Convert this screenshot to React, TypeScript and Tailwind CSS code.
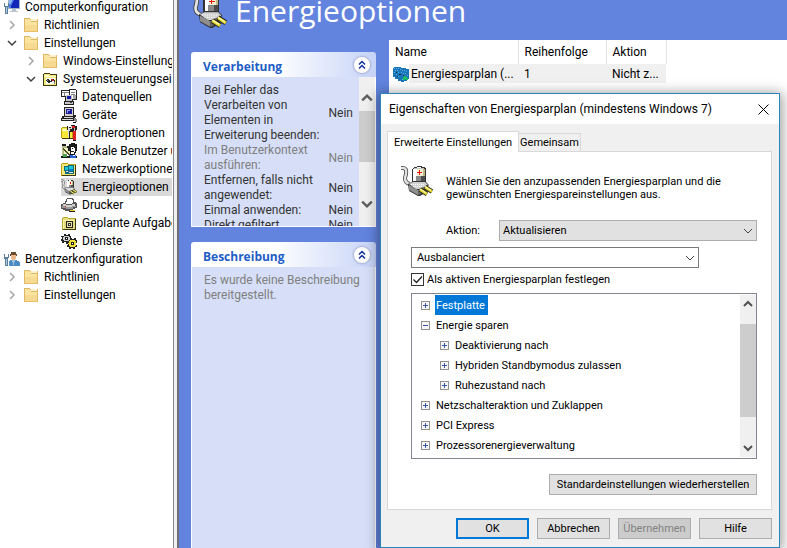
import { useState, type ReactNode } from 'react';
import { clsx } from 'clsx';

type Shape = [color: string, d: string];

// 16x16 pixel drawings, painted in order
const icons: Record<string, Shape[]> = {
  computer: [
    ['#9fb4c8', 'M4 0h12v10H4z'],
    ['#1226b8', 'M5 1h10v8H5z'],
    ['#4a7be8', 'M5 1h5v1h-1v2H8v2H7v3H5z'],
    ['#8fb6f5', 'M5 1h3v2H7v2H5z'],
    ['#b9c3cc', 'M8 10h4v2H8zM6 12h8v1H6z'],
    ['#5c7f9c', 'M0 4h1v3h3V4h1v4H4v7H1V8H0z'],
    ['#a9cce4', 'M2 8h1v6H2z'],
  ],
  folder: [
    ['#e0b765', 'M1 1h6v1h8v13H1z'],
    ['#fff3cf', 'M8 2h6v2H8z'],
    ['#fbe3a0', 'M2 2h5v1h1v2h6v9H2z'],
    ['#f7da92', 'M2 8h12v6H2z'],
    ['#e9bd63', 'M1 14h14v1H1z'],
  ],
  panel: [
    ['#3d3a10', 'M1 3h1V2h6v1h7v12H1z'],
    ['#f2e87b', 'M2 3h6v1h6v10H2z'],
    ['#fffbd0', 'M3 4h4v1H3zM2 5h12v1H2z'],
    ['#ffffff', 'M4 7h9v6H4z'],
    ['#2a2a2a', 'M4 9h1V8h2v1h1v1h1V8h3v1h1v3h-1v-2h-2v1H8v1H6v-1H5v-1H4z'],
    ['#c62222', 'M9 8h2v1H9zM10 9h2v1h-2z'],
    ['#8c8c8c', 'M5 9h1v1H5zM12 11h1v2h-1z'],
  ],
  database: [
    ['#222222', 'M0 1h9v7H0zM8 0h7v1h1v10H8zM4 5h8v8H4zM3 12h10v4H3z'],
    ['#ffffff', 'M1 2h7v5H1zM9 1h6v9H9z'],
    ['#808080', 'M1 3h7v1H1zM3 4h1v3H3zM10 3h4v1h-4zM10 5h4v1h-4z'],
    ['#c6c6c6', 'M5 6h6v6H5zM4 13h8v2H4z'],
    ['#1018a8', 'M6 7h4v3H6z'],
    ['#a8a8a8', 'M12 6h3v4h-3z'],
    ['#444444', 'M9 13h2v1H9z'],
  ],
  devices: [
    ['#222222', 'M3 0h10v10H3zM1 9h12v1h1v4H0v-3h1zM13 8h2v2h-2z'],
    ['#d4d0c8', 'M4 1h8v8H4z'],
    ['#1b1b9c', 'M5 2h6v5H5z'],
    ['#8b9ff0', 'M6 3h3v1H7v2H6z'],
    ['#d8d8d8', 'M3 10h9v1H3zM1 12h11v1H1z'],
    ['#888888', 'M13 11h2v1h1v3h-2v-1h-1z'],
    ['#111111', 'M12 15h3v1h-3z'],
  ],
  folderTools: [
    ['#b8a010', 'M0 3h1V2h5v1h6v10H0z'],
    ['#3d3a10', 'M1 13h11v1H1z'],
    ['#f8e93b', 'M1 3h5v1h5v9H1z'],
    ['#fffbd0', 'M2 4h3v1H2zM1 5h7v1H1z'],
    ['#222222', 'M6 1h1v1h3V0h4v1h2v4h-1v11h-3V7H9v7H8V5H6z'],
    ['#d8d8d8', 'M7 2h1v1h2V1h1v3H9v2H8v6H7z'],
    ['#e02020', 'M11 1h3v2h-3zM12 6h3v9h-3z'],
    ['#bdbdbd', 'M13 3h1v3h-1z'],
  ],
  users: [
    ['#1a1a1a', 'M1 1h4v2h3V1h2V0h4v1h2v7h-1v2h-1v2H9V9H7V6H5V3H1z'],
    ['#b8bd8a', 'M1 3h5v10H1z'],
    ['#f0efc0', 'M3 5h4v3h2v3H6v2H3z'],
    ['#ffffff', 'M10 4h3v1h1v4h-1v2h-3z'],
    ['#1a1a1a', 'M11 5h1v1h-1zM10 8h3v1h-3zM0 13h16v2H0z'],
    ['#2a62d8', 'M9 12h3v1h2v-1h1v3H9z'],
    ['#4aa050', 'M2 11h4v3H2z'],
    ['#4a4a2a', 'M1 6l1-1 7 7-1 1z'],
  ],
  network: [
    ['#b8a010', 'M0 3h1V2h6v1h8v12H0z'],
    ['#3d3a10', 'M1 14h14v1H1zM14 4h1v11h-1z'],
    ['#f2e87b', 'M1 3h6v1h7v10H1z'],
    ['#0a6a7a', 'M3 5h5v5H3zM7 4h6v9H7zM4 10h4v3H4z'],
    ['#18c8d8', 'M4 6h3v3H4zM8 5h4v5H8z'],
    ['#0a7ad0', 'M8 8h4v2H8z'],
    ['#e6e6e6', 'M5 10h2v1H5zM8 11h4v1H8z'],
  ],
  printer: [
    ['#555555', 'M6 1h6v1h1v3h2v1h1v5h-2v1h-2v1H9v1H4v-1H2v-1H0V7h2V6h2V4h1V2h1z'],
    ['#ffffff', 'M6 2h5v1h1v3h-1v1H5V5h1z'],
    ['#d0d0d0', 'M2 7h3v1h6V7h3v2h-3v1H5V9H2z'],
    ['#989898', 'M1 9h3v1h7V9h4v1h-3v2H5v-1H1z'],
    ['#f5d020', 'M9 13h5v1H9z'],
    ['#222222', 'M8 14h6v1H8z'],
    ['#e02020', 'M4 9h1v1H4z'],
  ],
  tasks: [
    ['#b8a830', 'M1 3h1V2h5v1h8v12H1z'],
    ['#3d3a10', 'M2 14h13v1H2zM14 4h1v11h-1z'],
    ['#e4dc7c', 'M2 3h5v1h7v10H2z'],
    ['#fbf4a8', 'M2 5h11v1H3v8H2z'],
    ['#222222', 'M5 6h7v7H5z'],
    ['#e8e0a0', 'M6 7h5v5H6z'],
    ['#333333', 'M7 8h3v3H7z'],
    ['#ffffff', 'M8 9h1v1H8z'],
  ],
  services: [
    ['#222222', 'M3 1h2v1h2V1h2v2h1v2h1v2H9v2H7v2H5V9H3v1H1V8H0V6h1V4H0V3h3z'],
    ['#d0d0d0', 'M3 3h5v1h1v3H8v1H3V7H2V4h1z'],
    ['#222222', 'M4 4h3v3H4z'],
    ['#ffffff', 'M5 5h1v1H5z'],
    ['#222222', 'M9 5h2v1h2V5h2v2h1v3h-1v2h1v2h-2v2h-2v-1h-2v1H8v-2H6v-2h1v-2H6V8h2V7h1z'],
    ['#f0df3a', 'M9 7h5v1h1v5h-1v1H9v-1H8v-2H7v-1h1V8h1z'],
    ['#222222', 'M10 9h3v3h-3z'],
    ['#ffffff', 'M11 10h1v1h-1z'],
  ],
  user: [
    ['#6b4a2c', 'M7 1h5v2h1v2H6V3h1z'],
    ['#e9b98c', 'M7 4h5v4h-1v1H8V8H7z'],
    ['#4f8cc4', 'M6 9h7v1h2v1h1v4H5v-5h1z'],
    ['#9cc4e6', 'M8 9h3v2h-1v3H9v-3H8z'],
    ['#5c7f9c', 'M0 3h1v3h3V3h1v4H4v8H1V8H0z'],
    ['#a9cce4', 'M2 8h1v6H2z'],
  ],
  plan: [
    ['#1a74b8', 'M1 1h7v1h5v1h3v10h-2v2h-3v1H8v-1H5v-2H2v-2H0V2h1z'],
    ['#5cb4e8', 'M1 2h1v1H1zM3 2h1v1H3zM5 2h1v1H5zM7 3h1v1H7zM2 4h1v1H2zM4 4h1v1H4zM9 4h1v1H9zM11 4h1v1h-1zM13 5h1v1h-1zM1 6h1v1H1zM3 8h1v1H3zM5 6h1v1H5zM8 6h1v1H8zM10 7h1v1h-1zM12 7h1v1h-1zM14 9h1v1h-1zM5 10h1v1H5zM9 13h1v1H9z'],
    ['#062c58', 'M3 6h1v1H3zM6 8h2v1H6zM4 10h1v1H4zM10 9h1v1h-1zM13 13h1v1h-1z'],
    ['#18c060', 'M10 11h1v-1h2v1h1v1h1v2h-2v-1h-1v1h-2z'],
  ],
};

function PixelIcon({ name }: { name: string }) {
  return (
    <svg viewBox="0 0 16 16" className="size-4 shrink-0" shapeRendering="crispEdges" aria-hidden="true">
      {icons[name].map(([color, d], i) => (
        <path key={i} fill={color} d={d} />
      ))}
    </svg>
  );
}

// Battery with a mains plug
function PowerIcon({ className }: { className: string }) {
  return (
    <svg viewBox="0 0 32 32" className={clsx('shrink-0', className)} aria-hidden="true">
      <path d="M0 3h2q4 0 3 6l-1 4q0 5 5 6" fill="none" stroke="#444" strokeWidth="4" />
      <path d="M0 3h2q4 0 3 6l-1 4q0 5 5 6" fill="none" stroke="#e4e4e4" strokeWidth="2.400" />
      <g shapeRendering="crispEdges">
        <path fill="#333" d="M13 2h3V1h5v1h3v1h1v14H11V4h1V3h1z" />
        <path fill="#c4c4c4" d="M13 3h10v1H13z" />
        <path fill="#fff" d="M16 2h4v1h-4zM12 4h4v12h-4z" />
        <path fill="#f4f0d0" d="M16 4h6v7h-6z" />
        <path fill="#c0b888" d="M22 4h2v7h-2z" />
        <path fill="#8a8a8a" d="M15 11h5v5h-5z" />
        <path fill="#4c4c4c" d="M20 11h4v5h-4z" />
        <path fill="#e81010" d="M18 5h1v2h2v1h-2v2h-1V8h-2V7h2z" />
      </g>
      <path fill="#333" d="M7 19l4-2h14l3 3-3 3-1 5-5 3h-2l-9-5z" />
      <path fill="#8e8e8e" d="M8 20l9 5v5l-9-5z" />
      <path fill="#686868" d="M17 25l6-3v5l-5 3h-1z" />
      <path fill="#d2d2d2" d="M8 19l4-2h12l3 3-4 2-5 2h-3z" />
      <path fill="none" stroke="#fff" strokeDasharray="1 1" d="M10 19.500h14M12 21.500h9" />
      <path d="M24 22l7 4.500M19 24.500l7 4.500" fill="none" stroke="#222" strokeWidth="4.500" />
      <path d="M24 22l7 4.500M19 24.500l7 4.500" fill="none" stroke="#e4d82c" strokeWidth="2.800" />
      <path d="M24 21.500l6 4M19 24l6 4" fill="none" stroke="#fffbc0" strokeWidth="1" />
    </svg>
  );
}

function Chevron({ dir, className }: { dir: 'up' | 'down' | 'right'; className: string }) {
  const d = { up: 'M1 7l4-4 4 4', down: 'M1 3l4 4 4-4', right: 'M3 1l4 4-4 4' }[dir];
  return (
    <svg viewBox="0 0 10 10" className={clsx('shrink-0', className)} fill="none" stroke="currentColor" aria-hidden="true">
      <path d={d} />
    </svg>
  );
}

interface NavItem {
  label: string;
  icon: string;
  level: 0 | 1 | 2 | 3;
  open?: boolean;
  selected?: boolean;
}

const navItems: NavItem[] = [
  { label: 'Computerkonfiguration', icon: 'computer', level: 0 },
  { label: 'Richtlinien', icon: 'folder', level: 1, open: false },
  { label: 'Einstellungen', icon: 'folder', level: 1, open: true },
  { label: 'Windows-Einstellungen', icon: 'folder', level: 2, open: false },
  { label: 'Systemsteuerungseinstellungen', icon: 'panel', level: 2, open: true },
  { label: 'Datenquellen', icon: 'database', level: 3 },
  { label: 'Geräte', icon: 'devices', level: 3 },
  { label: 'Ordneroptionen', icon: 'folderTools', level: 3 },
  { label: 'Lokale Benutzer und Gruppen', icon: 'users', level: 3 },
  { label: 'Netzwerkoptionen', icon: 'network', level: 3 },
  { label: 'Energieoptionen', icon: 'power', level: 3, selected: true },
  { label: 'Drucker', icon: 'printer', level: 3 },
  { label: 'Geplante Aufgaben', icon: 'tasks', level: 3 },
  { label: 'Dienste', icon: 'services', level: 3 },
  { label: 'Benutzerkonfiguration', icon: 'user', level: 0 },
  { label: 'Richtlinien', icon: 'folder', level: 1, open: false },
  { label: 'Einstellungen', icon: 'folder', level: 1, open: false },
];

const navIndent = ['pl-1', 'pl-[7px]', 'pl-[26px]', 'pl-[61px]'];

function NavTree() {
  return (
    <nav className="w-[173px] shrink-0 overflow-hidden bg-white pr-px">
      <ul className="-mt-0.5 overflow-hidden">
        {navItems.map((item, i) => (
          <li key={i} className={clsx('flex h-[18px] items-center whitespace-nowrap', navIndent[item.level])}>
            {item.open !== undefined && (
              <Chevron
                dir={item.open ? 'down' : 'right'}
                className={clsx('mr-1.5 size-[10px] stroke-[1.5]', item.open ? 'text-[#404040]' : 'text-[#a6a6a6]')}
              />
            )}
            <span className={clsx('flex h-full items-center', item.selected && 'bg-[#d9d9d9]')}>
              {item.icon === 'power' ? <PowerIcon className="size-4" /> : <PixelIcon name={item.icon} />}
            </span>
            <span className={clsx('flex h-full flex-1 items-center pl-[5px]', item.selected && 'bg-[#d9d9d9]')}>
              {item.label}
            </span>
          </li>
        ))}
      </ul>
    </nav>
  );
}

function Card({ title, className, children }: { title: string; className?: string; children: ReactNode }) {
  return (
    <section className={clsx('flex flex-col', className)}>
      <header className="flex h-[25px] shrink-0 items-center justify-between rounded-t-[3px] bg-linear-to-r from-white from-45% to-[#c6d3f7] pr-1.5 pl-3">
        <h2 className="pt-1 font-['Open_Sans',sans-serif] font-bold text-[#215dc6]">{title}</h2>
        <button
          type="button"
          aria-label={`${title} ausblenden`}
          className="flex size-4 items-center justify-center rounded-full bg-white shadow-[0_0_2px_1px_#a3aed0]"
        >
          <svg viewBox="0 0 10 10" className="size-[10px]" fill="none" stroke="#10309c" strokeWidth="1.500" aria-hidden="true">
            <path d="M2 4.500l3-3 3 3M2 8.500l3-3 3 3" />
          </svg>
        </button>
      </header>
      {children}
    </section>
  );
}

const processing = [
  { label: 'Bei Fehler das Verarbeiten von Elementen in Erweiterung beenden:', value: 'Nein' },
  { label: 'Im Benutzerkontext ausführen:', value: 'Nein', muted: true },
  { label: 'Entfernen, falls nicht angewendet:', value: 'Nein' },
  { label: 'Einmal anwenden:', value: 'Nein' },
  { label: 'Direkt gefiltert', value: 'Nein' },
];

function SideCards() {
  return (
    <div className="flex w-[185px] shrink-0 flex-col gap-[15px] pt-3">
      <Card title="Verarbeitung" className="h-[175px]">
        <div className="flex min-h-0 flex-1 overflow-hidden border border-t-0 border-white bg-[#d6dff7]">
          <dl className="flex-1 pt-1.5 pr-1.5 pl-3 leading-[15px]">
            {processing.map(row => (
              <div
                key={row.label}
                className={clsx('flex items-center justify-between', row.muted ? 'text-[#808080]' : 'text-[#333]')}
              >
                <dt className="w-[120px]">{row.label}</dt>
                <dd>{row.value}</dd>
              </div>
            ))}
          </dl>
          <div className="flex w-4 shrink-0 flex-col items-center bg-[#f0f0f0] pt-[15px] pb-4 text-[#606060]">
            <Chevron dir="up" className="size-3 stroke-2" />
            <div className="mt-[7px] mb-auto h-[51px] w-full bg-[#cdcdcd]" />
            <Chevron dir="down" className="size-3 stroke-2" />
          </div>
        </div>
      </Card>
      <Card title="Beschreibung" className="flex-1">
        <p className="flex-1 border-x border-white bg-[#d6dff7] px-3 pt-1.5 leading-[15px] text-[#808080]">
          Es wurde keine Beschreibung bereitgestellt.
        </p>
      </Card>
    </div>
  );
}

function PlanList() {
  return (
    <div className="flex-1 bg-white">
      <table className="table-fixed border-collapse text-left whitespace-nowrap">
        <thead>
          <tr className="h-6">
            <th className="w-[129px] border-r border-[#e5e5e5] pl-1.5 font-normal">Name</th>
            <th className="w-[88px] border-r border-[#e5e5e5] pl-1.5 font-normal">Reihenfolge</th>
            <th className="w-[60px] border-r border-[#e5e5e5] pl-1.5 font-normal">Aktion</th>
          </tr>
        </thead>
        <tbody>
          <tr className="h-[19px]">
            <td className="p-0 pl-1">
              <div className="flex h-[19px] items-center">
                <PixelIcon name="plan" />
                <span className="flex h-full flex-1 items-center bg-[#f0f0f0] pl-0.5">Energiesparplan (...</span>
              </div>
            </td>
            <td className="bg-[#f0f0f0] p-0 pl-1.5">1</td>
            <td className="bg-[#f0f0f0] p-0 pl-1.5">Nicht z...</td>
          </tr>
        </tbody>
      </table>
    </div>
  );
}

const powerSettings = [
  { label: 'Festplatte', selected: true },
  { label: 'Energie sparen', open: true },
  { label: 'Deaktivierung nach', child: true },
  { label: 'Hybriden Standbymodus zulassen', child: true },
  { label: 'Ruhezustand nach', child: true },
  { label: 'Netzschalteraktion und Zuklappen' },
  { label: 'PCI Express' },
  { label: 'Prozessorenergieverwaltung' },
];

function ExpandBox({ open }: { open?: boolean }) {
  return (
    <svg viewBox="0 0 9 9" className="size-[9px] shrink-0" shapeRendering="crispEdges" aria-hidden="true">
      <path fill="#919191" d="M0 0h9v9H0z" />
      <path fill="#f6f6f6" d="M1 1h7v7H1z" />
      <path fill="#3a55a4" d={open ? 'M2 4h5v1H2z' : 'M2 4h5v1H2zM4 2h1v5H4z'} />
    </svg>
  );
}

function SettingsTree() {
  return (
    <div className="flex h-[166px] border border-[#828790] py-px pl-px">
      <ul className="flex-1 pl-2">
        {powerSettings.map(item => (
          <li key={item.label} className={clsx('flex h-5 items-center gap-[5px]', item.child && 'pl-[19px]')}>
            <ExpandBox open={item.open} />
            <span className={clsx('flex h-full items-center px-px', item.selected && 'bg-[#0078d7] pr-[3px] text-white')}>
              {item.label}
            </span>
          </li>
        ))}
      </ul>
      <div className="flex w-4 shrink-0 flex-col items-center bg-[#f0f0f0] py-1 text-[#505050]">
        <Chevron dir="up" className="size-[10px] stroke-2" />
        <div className="mt-[15px] mb-auto h-[93px] w-full bg-[#cdcdcd]" />
        <Chevron dir="down" className="size-[10px] stroke-2" />
      </div>
    </div>
  );
}

function DialogButton({ children, className, disabled }: { children: ReactNode; className?: string; disabled?: boolean }) {
  return (
    <button
      type="button"
      disabled={disabled}
      className={clsx(
        'h-[21px]',
        disabled ? 'bg-[#cccccc] text-[#838383]' : 'bg-[#e1e1e1]',
        className ?? 'w-[73px] border border-[#adadad]',
      )}
    >
      {children}
    </button>
  );
}

function PropertiesDialog() {
  const [active, setActive] = useState(true);

  return (
    <div
      role="dialog"
      aria-labelledby="dialog-title"
      className="absolute top-[93px] left-[380px] w-[400px] border border-[#2a84bd] bg-[#f0f0f0] text-[11px] leading-[13px] text-black shadow-[0_2px_12px_2px_rgba(0,0,0,0.4)]"
    >
      <div className="flex h-[30px] items-center justify-between bg-white pr-2.5 pl-2">
        <h1 id="dialog-title" className="text-xs">
          Eigenschaften von Energiesparplan (mindestens Windows 7)
        </h1>
        <button type="button" aria-label="Schließen">
          <svg viewBox="0 0 11 11" className="size-[11px]" stroke="#000" aria-hidden="true">
            <path d="M0.500 0.500l10 10M10.500 0.500l-10 10" />
          </svg>
        </button>
      </div>

      <div className="pt-[7px] pr-[7px] pb-2 pl-1.5">
        <div role="tablist" className="flex items-end">
          <button
            type="button"
            role="tab"
            aria-selected="true"
            className="z-10 -mb-px h-[21px] w-[132px] border border-b-0 border-[#d9d9d9] bg-white"
          >
            Erweiterte Einstellungen
          </button>
          <button
            type="button"
            role="tab"
            aria-selected="false"
            className="h-[18px] w-[62px] border border-b-0 border-l-0 border-[#d9d9d9] bg-[#f0f0f0]"
          >
            Gemeinsam
          </button>
        </div>

        <div className="border border-[#d9d9d9] bg-white pt-[13px] pr-3.5 pb-3.5 pl-[23px]">
          <div className="-ml-2.5 flex gap-[13px]">
            <PowerIcon className="size-8" />
            <p className="pt-2.5">
              Wählen Sie den anzupassenden Energiesparplan und die
              <br />
              gewünschten Energiespareinstellungen aus.
            </p>
          </div>

          <div className="mt-[19px] flex items-center pl-[35px]">
            <label htmlFor="action" className="w-[53px]">
              Aktion:
            </label>
            <div className="relative flex-1">
              <select
                id="action"
                className="h-[21px] w-full appearance-none border border-[#adadad] bg-[#e1e1e1] pl-[3px]"
              >
                <option>Aktualisieren</option>
              </select>
              <Chevron dir="down" className="pointer-events-none absolute top-1.5 right-1 size-[10px] text-[#444]" />
            </div>
          </div>

          <div className="relative mt-1.5 w-[288px]">
            <select
              aria-label="Energiesparplan"
              className="h-[21px] w-full appearance-none border border-[#7a7a7a] bg-white pl-[5px]"
            >
              <option>Ausbalanciert</option>
            </select>
            <Chevron dir="down" className="pointer-events-none absolute top-1.5 right-1 size-[10px] text-[#444]" />
          </div>

          <label className="mt-[5px] mb-[7px] flex items-center gap-[3px]">
            <span className="relative size-[13px]">
              <input
                type="checkbox"
                checked={active}
                onChange={e => setActive(e.target.checked)}
                className="block size-[13px] appearance-none border border-[#333] bg-white"
              />
              {active && (
                <svg
                  viewBox="0 0 13 13"
                  className="pointer-events-none absolute inset-0 size-[13px]"
                  fill="none"
                  stroke="#222"
                  strokeWidth="1.300"
                  aria-hidden="true"
                >
                  <path d="M2.500 6.500l3 3 5.500-6" />
                </svg>
              )}
            </span>
            Als aktiven Energiesparplan festlegen
          </label>

          <SettingsTree />

          <div className="mt-[15px] flex justify-end">
            <DialogButton className="w-[208px] border border-[#adadad]">Standardeinstellungen wiederherstellen</DialogButton>
          </div>
        </div>

        <div className="mt-2 flex justify-end gap-2">
          <DialogButton className="w-[73px] border-2 border-[#0078d7]">OK</DialogButton>
          <DialogButton>Abbrechen</DialogButton>
          <DialogButton disabled>Übernehmen</DialogButton>
          <DialogButton>Hilfe</DialogButton>
        </div>
      </div>
    </div>
  );
}

export default function App() {
  return (
    <div className="relative flex h-screen overflow-hidden bg-[#f0f0f0] font-[Roboto,sans-serif] text-xs text-black">
      <NavTree />
      <div className="w-1.5 shrink-0 border-r-2 border-l border-r-[#6f6f76] border-l-[#828790]" />
      <main className="flex min-w-0 flex-1 flex-col bg-[#6284de] pl-3">
        <header className="flex h-[29px] shrink-0 items-end gap-2">
          <PowerIcon className="size-9" />
          <h1 className="font-['Open_Sans',sans-serif] text-[30px] leading-9 text-white">Energieoptionen</h1>
        </header>
        <div className="mt-[11px] flex min-h-0 flex-1 gap-[13px]">
          <SideCards />
          <PlanList />
        </div>
      </main>
      <PropertiesDialog />
    </div>
  );
}
